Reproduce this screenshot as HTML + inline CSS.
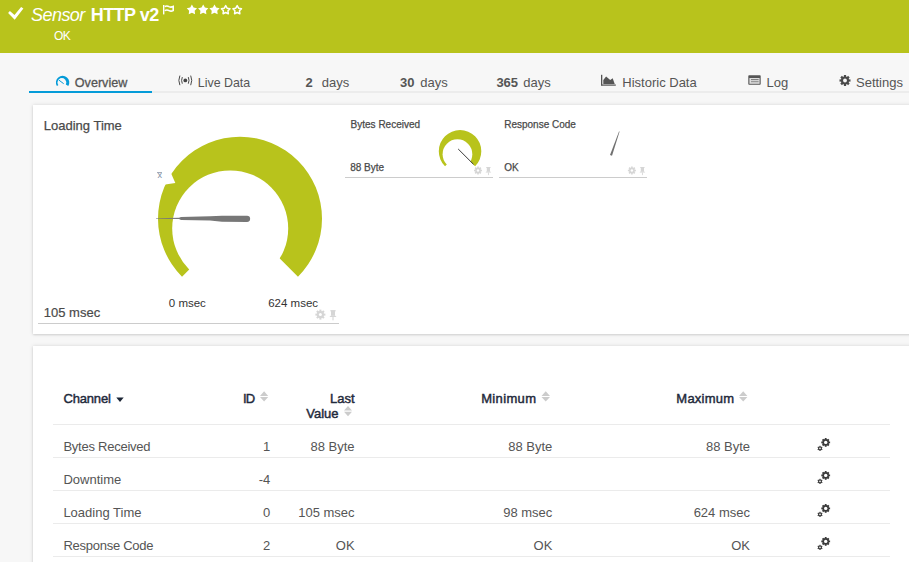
<!DOCTYPE html>
<html><head><meta charset="utf-8">
<style>
*{margin:0;padding:0;box-sizing:border-box}
html,body{width:909px;height:562px;overflow:hidden;background:#f7f7f7;font-family:"Liberation Sans",sans-serif;position:relative}
.a{position:absolute;white-space:nowrap}
#hdr{position:absolute;left:0;top:0;width:909px;height:53px;background:#b8c31c}
.t13{font-size:13px;line-height:13px}
.tab{color:#555;font-size:13px;line-height:13px;top:76.4px}
.card{position:absolute;background:#fff;box-shadow:0 0 4px rgba(0,0,0,0.13),0 1px 2px rgba(0,0,0,0.1)}
.th{font-size:13px;line-height:13px;font-weight:normal;color:#1f2a3c;-webkit-text-stroke:0.45px #1f2a3c}
.td{font-size:13px;line-height:13px;color:#555}
.hl{position:absolute;left:53px;width:837px;height:1px;background:#ebebeb}
</style></head><body>
<div id="hdr"></div>
<!-- header -->
<svg class="a" style="left:0;top:0" width="260" height="53">
  <polygon points="8.1,12.9 9.9,11.1 14.5,14.9 21.1,7.1 23.4,8.5 14.7,19.7" fill="#fff"/>
  <rect x="163" y="5" width="1.4" height="9.4" fill="#fff"/>
  <path d="M164.7,6.5 Q167,5.4 169,6.6 Q171,7.6 173.2,6.5 V10.6 Q171,11.7 169,10.6 Q167,9.5 164.7,10.6" fill="none" stroke="#fff" stroke-width="1.6"/>
  <g fill="#fff">
  <polygon points="191.90,4.50 193.60,7.55 197.04,8.23 194.66,10.80 195.07,14.27 191.90,12.80 188.73,14.27 189.14,10.80 186.76,8.23 190.20,7.55"/>
  <polygon points="203.20,4.50 204.90,7.55 208.34,8.23 205.96,10.80 206.37,14.27 203.20,12.80 200.03,14.27 200.44,10.80 198.06,8.23 201.50,7.55"/>
  <polygon points="214.50,4.50 216.20,7.55 219.64,8.23 217.26,10.80 217.67,14.27 214.50,12.80 211.33,14.27 211.74,10.80 209.36,8.23 212.80,7.55"/>
  </g>
  <g fill="none" stroke="#fff" stroke-width="1.5" stroke-linejoin="round">
  <polygon points="225.70,5.60 227.11,8.16 229.98,8.71 227.98,10.84 228.35,13.74 225.70,12.50 223.05,13.74 223.42,10.84 221.42,8.71 224.29,8.16"/>
  <polygon points="237.20,5.60 238.61,8.16 241.48,8.71 239.48,10.84 239.85,13.74 237.20,12.50 234.55,13.74 234.92,10.84 232.92,8.71 235.79,8.16"/>
  </g>
</svg>
<div class="a" style="left:31px;top:5.9px;font-size:18px;line-height:18px;color:#fff;font-style:italic;letter-spacing:-0.55px">Sensor</div>
<div class="a" style="left:90.7px;top:5.6px;font-size:18px;line-height:18px;color:#fff;font-weight:bold;letter-spacing:-0.54px">HTTP v2</div>
<div class="a" style="left:54px;top:29.7px;font-size:12px;line-height:12px;color:#fff;letter-spacing:-0.7px">OK</div>

<!-- tabs -->
<div class="a" style="left:29px;top:91px;width:880px;height:2px;background:#ececec"></div>
<div class="a" style="left:29px;top:91px;width:123px;height:2px;background:#049bd8"></div>
<svg class="a" style="left:50px;top:70px" width="25" height="20">
  <mask id="ovm"><rect width="25" height="20" fill="#000"/><path d="M12.60,12.50 L6.92,16.05 A6.7,6.7 0 1 1 18.28,16.05 Z" fill="#fff"/><circle cx="11.9" cy="12.5" r="4.4" fill="#000"/></mask>
  <rect width="25" height="20" fill="#049bd8" mask="url(#ovm)"/>
  <path d="M9,10.2 L13.7,13.7" stroke="#049bd8" stroke-width="1"/>
</svg>
<div class="a tab" style="left:74.8px;top:76.8px;font-size:12.6px;-webkit-text-stroke:0.3px #555">Overview</div>
<svg class="a" style="left:176px;top:72px" width="20" height="16">
  <circle cx="9.3" cy="8.4" r="1.9" fill="#444"/>
  <path d="M6.3,5.1 Q4.9,8.4 6.3,11.7 M12.3,5.1 Q13.7,8.4 12.3,11.7" fill="none" stroke="#4a4a4a" stroke-width="1"/>
  <path d="M3.9,3.6 Q1.8,8.4 3.9,13.2 M14.7,3.6 Q16.8,8.4 14.7,13.2" fill="none" stroke="#4a4a4a" stroke-width="1"/>
</svg>
<div class="a tab" style="left:197.8px;top:76.8px;font-size:12.4px">Live Data</div>
<div class="a tab" style="left:305.4px;font-weight:bold">2</div>
<div class="a tab" style="left:321.7px">days</div>
<div class="a tab" style="left:400px;font-weight:bold">30</div>
<div class="a tab" style="left:420.3px">days</div>
<div class="a tab" style="left:496.4px;font-weight:bold">365</div>
<div class="a tab" style="left:523.2px">days</div>
<svg class="a" style="left:596px;top:70px" width="24" height="20">
  <rect x="5" y="4.8" width="1.3" height="11" fill="#555"/>
  <rect x="6" y="14.4" width="13.8" height="1.4" fill="#666"/>
  <path d="M7.3,14 V10 L10.1,6.4 L14.2,10.1 L16.7,8.2 L18.7,14 Z" fill="#555"/>
</svg>
<div class="a tab" style="left:622.3px">Historic Data</div>
<svg class="a" style="left:744px;top:70px" width="24" height="20">
  <rect x="4.3" y="5.2" width="12.4" height="9.6" rx="0.8" fill="#555"/>
  <rect x="5.4" y="8" width="10.2" height="5.8" fill="#ddd"/>
  <rect x="7" y="9.1" width="7.6" height="1" fill="#777"/>
  <rect x="7" y="11.2" width="7.6" height="1" fill="#888"/>
</svg>
<div class="a tab" style="left:766.5px">Log</div>
<svg class="a" style="left:834px;top:70px" width="24" height="20">
  <g transform="translate(11,10.5)" fill="#4a4a4a">
    <circle r="4"/>
    <rect x="-1.1" y="-5.5" width="2.2" height="11"/>
    <rect x="-1.1" y="-5.5" width="2.2" height="11" transform="rotate(45)"/>
    <rect x="-1.1" y="-5.5" width="2.2" height="11" transform="rotate(90)"/>
    <rect x="-1.1" y="-5.5" width="2.2" height="11" transform="rotate(135)"/>
    <circle r="1.9" fill="#f7f7f7"/>
  </g>
</svg>
<div class="a tab" style="left:856px">Settings</div>

<!-- card 1 -->
<div class="card" style="left:33px;top:105px;width:890px;height:229px"></div>
<div class="a t13" style="left:43.8px;top:119.1px;color:#4a4a4a;-webkit-text-stroke:0.25px #4a4a4a">Loading Time</div>
<svg class="a" style="left:0;top:0" width="909" height="340">
  <path d="M240.00,218.70 L182.02,276.68 A82,82 0 1 1 297.98,276.68 Z" fill="#b8c31c"/>
  <circle cx="230.2" cy="228.4" r="58" fill="#fff"/>
  <polygon points="164.5,169.4 171.4,173.9 175.3,182.9 165.3,184.6 157.8,181.2" fill="#fff"/>
  <path d="M156,218.2 L179,217.8 L181,217.1 L210,216.3 L222,215.7 L247,215.7 A3.15,3.15 0 0 1 247,222 L222,221.8 L210,220.5 L181,219.9 L179,219.1 L156,218.7 Z" fill="#777"/>
  <!-- small gauge -->
  <path d="M460.05,151.25 L445.02,166.28 A21.25,21.25 0 1 1 475.08,166.28 Z" fill="#b8c31c"/>
  <circle cx="457.45" cy="154.15" r="14.85" fill="#fff"/>
  <path d="M458.2,149 L473.5,164.3" stroke="#3a3a3a" stroke-width="1"/>
  <!-- response code needle -->
  <path d="M610,155 L619,131.4 L619.6,131.6 L612,155.8 Z" fill="#707070"/>
  <!-- lines -->
  <rect x="38" y="323" width="301" height="1" fill="#ccc"/>
  <rect x="345" y="177" width="148" height="1" fill="#ccc"/>
  <rect x="499" y="177" width="148" height="1" fill="#ccc"/>
</svg>
<div class="a" style="left:157.6px;top:171.4px;font-size:9px;line-height:9px;color:#7d8ca3">x</div><div class="a" style="left:157.2px;top:172.2px;width:4.6px;height:0.8px;background:#a3abb9"></div>
<svg class="a" style="left:0;top:0" width="909" height="340">
  <defs>
    <g id="gear">
      <g fill="#d6d6d6">
      <circle r="3.6"/>
      <rect x="-1" y="-5" width="2" height="10"/>
      <rect x="-1" y="-5" width="2" height="10" transform="rotate(45)"/>
      <rect x="-1" y="-5" width="2" height="10" transform="rotate(90)"/>
      <rect x="-1" y="-5" width="2" height="10" transform="rotate(135)"/>
      </g>
      <circle r="1.5" fill="#fff"/>
    </g>
    <g id="pin" fill="#d6d6d6">
      <rect x="-2.8" y="-4.6" width="5.6" height="1"/>
      <rect x="-2" y="-4.6" width="4" height="5.4"/>
      <path d="M-2,0.6 H2 L3.6,2.1 H-3.6 Z"/>
      <rect x="-0.55" y="2" width="1.1" height="3.4"/>
    </g>
  </defs>
  <use href="#gear" transform="translate(320.4,314.6)"/>
  <use href="#pin" transform="translate(333,314.9)"/>
  <use href="#gear" transform="translate(478,170.5) scale(0.8)"/>
  <use href="#pin" transform="translate(488.4,170.8) scale(0.8)"/>
  <use href="#gear" transform="translate(631.9,170.5) scale(0.8)"/>
  <use href="#pin" transform="translate(642.4,170.8) scale(0.8)"/>
</svg>
<div class="a" style="left:168.8px;top:298.4px;font-size:11.5px;line-height:11.5px;color:#333">0 msec</div>
<div class="a" style="left:268.2px;top:298.4px;font-size:11.5px;line-height:11.5px;color:#333">624 msec</div>
<div class="a t13" style="left:43.8px;top:305.6px;color:#4a4a4a;-webkit-text-stroke:0.2px #4a4a4a">105 msec</div>

<div class="a" style="left:350.6px;top:119.5px;font-size:10px;line-height:10px;color:#4a4a4a;-webkit-text-stroke:0.25px #4a4a4a">Bytes Received</div>
<div class="a" style="left:350.2px;top:163px;font-size:10px;line-height:10px;color:#4a4a4a;-webkit-text-stroke:0.25px #4a4a4a">88 Byte</div>
<div class="a" style="left:504.2px;top:119.5px;font-size:10px;line-height:10px;color:#4a4a4a;-webkit-text-stroke:0.25px #4a4a4a">Response Code</div>
<div class="a" style="left:504.2px;top:163px;font-size:10px;line-height:10px;color:#4a4a4a;-webkit-text-stroke:0.25px #4a4a4a">OK</div>

<!-- card 2 -->
<div class="card" style="left:33px;top:346px;width:890px;height:240px"></div>
<div class="a th" style="left:63.4px;top:392.2px;letter-spacing:-0.15px">Channel</div>
<div class="a th" style="left:243px;top:392.2px;letter-spacing:-0.8px">ID</div>
<div class="a th" style="left:330px;top:392.2px">Last</div>
<div class="a th" style="left:306.3px;top:406.8px">Value</div>
<div class="a th" style="left:481.2px;top:392.2px;letter-spacing:0.35px">Minimum</div>
<div class="a th" style="left:676.3px;top:392.2px;letter-spacing:0.25px">Maximum</div>
<svg class="a" style="left:0;top:340px" width="909" height="222">
  <path d="M116.3,57.6 H123.7 L120,61.9 Z" fill="#1b2434"/>
  <g fill="#ccc">
    <path d="M260,55.9 L264.1,51.3 L268.2,55.9 Z M260,57 L264.1,61.6 L268.2,57 Z"/>
    <path d="M344,70.6 L348,66 L352,70.6 Z M344,71.7 L348,76.3 L352,71.7 Z"/>
    <path d="M541.5,55.9 L545.7,51.3 L550,55.9 Z M541.5,57 L545.7,61.6 L550,57 Z"/>
    <path d="M739,55.9 L743.2,51.3 L747.4,55.9 Z M739,57 L743.2,61.6 L747.4,57 Z"/>
  </g>
</svg>
<div class="hl" style="top:424px"></div>
<div class="hl" style="top:457px"></div>
<div class="hl" style="top:490px"></div>
<div class="hl" style="top:523px"></div>
<div class="hl" style="top:556px"></div>

<div class="a td" style="left:63.4px;top:439.7px;letter-spacing:-0.24px">Bytes Received</div>
<div class="a td" style="left:63.4px;top:472.7px">Downtime</div>
<div class="a td" style="left:63.4px;top:505.7px">Loading Time</div>
<div class="a td" style="left:63.4px;top:538.7px;letter-spacing:-0.26px">Response Code</div>

<div class="a td" style="right:638.8px;top:439.7px">1</div>
<div class="a td" style="right:638.8px;top:472.7px">-4</div>
<div class="a td" style="right:638.8px;top:505.7px">0</div>
<div class="a td" style="right:638.8px;top:538.7px">2</div>

<div class="a td" style="right:554.4px;top:439.7px">88 Byte</div>
<div class="a td" style="right:554.4px;top:505.7px">105 msec</div>
<div class="a td" style="right:554.4px;top:538.7px">OK</div>

<div class="a td" style="right:356.7px;top:439.7px">88 Byte</div>
<div class="a td" style="right:356.7px;top:505.7px">98 msec</div>
<div class="a td" style="right:356.7px;top:538.7px">OK</div>

<div class="a td" style="right:159px;top:439.7px">88 Byte</div>
<div class="a td" style="right:159px;top:505.7px">624 msec</div>
<div class="a td" style="right:159px;top:538.7px">OK</div>

<svg class="a" style="left:810px;top:430px" width="30" height="130">
  <defs>
    <g id="gears" fill="#3c3c3c">
      <g transform="translate(15.7,12.4)">
        <circle r="3.3"/>
        <rect x="-0.9" y="-4.4" width="1.8" height="8.8"/>
        <rect x="-0.9" y="-4.4" width="1.8" height="8.8" transform="rotate(45)"/>
        <rect x="-0.9" y="-4.4" width="1.8" height="8.8" transform="rotate(90)"/>
        <rect x="-0.9" y="-4.4" width="1.8" height="8.8" transform="rotate(135)"/>
        <circle r="1.7" fill="#fff"/>
      </g>
      <g transform="translate(10,18.4)">
        <circle r="1.9"/>
        <rect x="-0.6" y="-2.6" width="1.2" height="5.2"/>
        <rect x="-0.6" y="-2.6" width="1.2" height="5.2" transform="rotate(60)"/>
        <rect x="-0.6" y="-2.6" width="1.2" height="5.2" transform="rotate(120)"/>
        <circle r="0.8" fill="#fff"/>
      </g>
    </g>
  </defs>
  <use href="#gears"/>
  <use href="#gears" y="33"/>
  <use href="#gears" y="66"/>
  <use href="#gears" y="99"/>
</svg>
</body></html>
